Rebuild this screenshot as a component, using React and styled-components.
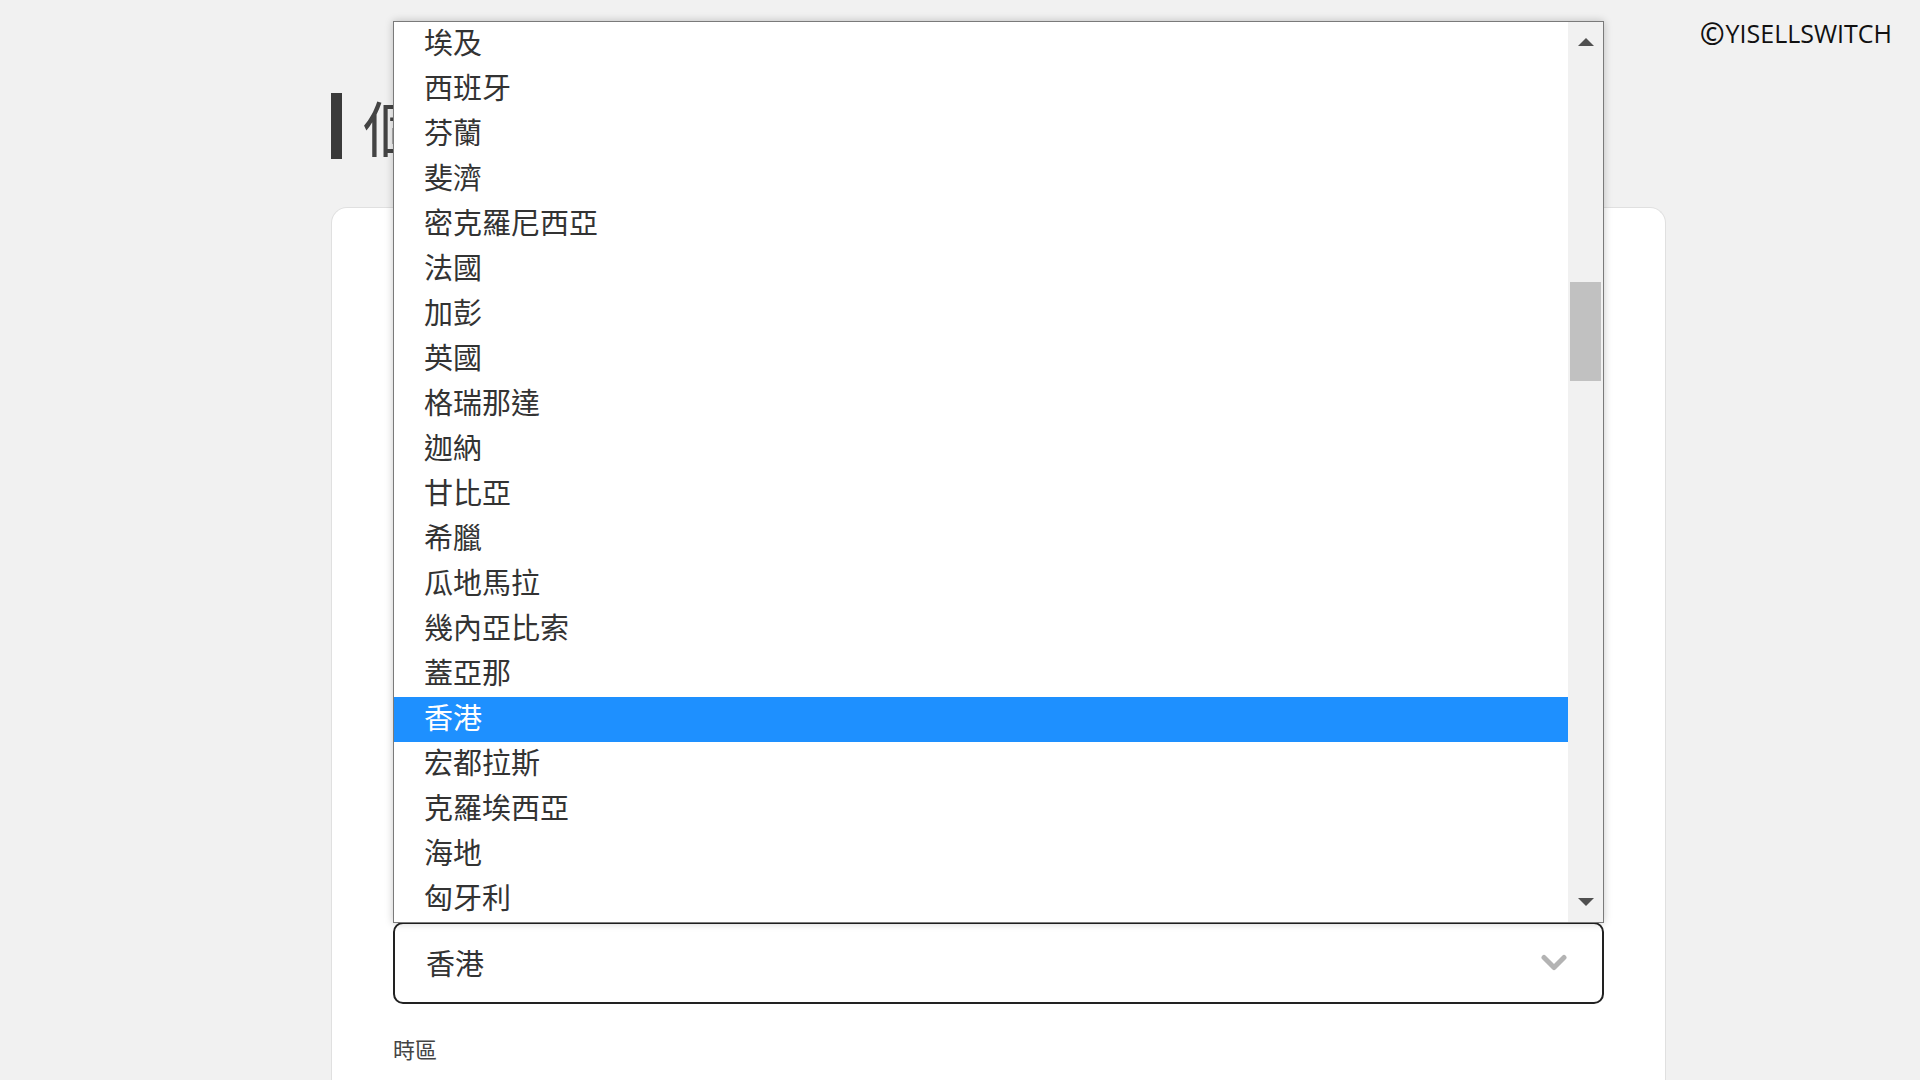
import React from 'react';
import styled, { createGlobalStyle } from 'styled-components';

const GlobalStyle = createGlobalStyle`
  html, body { margin: 0; padding: 0; background: #f1f1f1; }
  body {
    font-family: "Noto Sans CJK TC", "Noto Sans", sans-serif;
    color: #333;
    overflow: hidden;
  }
  * { box-sizing: border-box; }
`;

const Page = styled.div`
  position: relative;
  min-height: 100vh;
  padding: 93px 0 0 331px;
`;

const Watermark = styled.div`
  position: absolute;
  top: 16px;
  right: 28px;
  font-family: "Open Sans", "Noto Sans", sans-serif;
  font-size: 25px;
  font-weight: 500;
  line-height: 34px;
  color: #111;
  z-index: 20;
`;

const CopyMark = styled.span`
  font-size: 30px;
  font-weight: 600;
  line-height: 0;
  vertical-align: -2px;
  margin-right: 1px;
`;

const Main = styled.main`
  width: 1335px;
`;

const Heading = styled.h1`
  margin: 0;
  border-left: 11px solid #3a3a3a;
  padding-left: 21px;
  font-size: 60px;
  line-height: 66px;
  font-weight: 400;
  color: #444;
`;

const Card = styled.section`
  margin-top: 48px;
  background: #fff;
  border: 1px solid #e0e0e0;
  border-bottom: none;
  border-radius: 16px 16px 0 0;
  padding: 714px 61px 120px;
  display: flex;
  flex-direction: column;
  gap: 29px;
  min-height: 1000px;
`;

const Field = styled.div`
  display: flex;
  flex-direction: column;
  gap: 22px;
`;

const Label = styled.label`
  font-size: 22px;
  line-height: 30px;
  color: #444;
`;

const SelectWrap = styled.div`
  position: relative;
`;

const SelectBox = styled.div`
  height: 82px;
  border: 2px solid ${p => (p.$active ? '#222' : '#cfcfcf')};
  border-radius: 10px;
  background: #fff;
  display: flex;
  align-items: center;
  justify-content: space-between;
  padding: 0 35px 2px 31px;
  font-size: 29px;
  color: #333;
`;

const Popup = styled.div`
  position: absolute;
  left: 0;
  right: 0;
  bottom: calc(100% - 1px);
  height: 902px;
  display: flex;
  background: #fff;
  border: 1px solid #7a7a7a;
  box-shadow: 0 0 8px rgba(0, 0, 0, 0.22);
  z-index: 10;
`;

const OptionList = styled.ul`
  flex: 1;
  margin: 0;
  padding: 0;
  list-style: none;
  overflow: hidden;
`;

const Option = styled.li`
  height: 45px;
  line-height: 38px;
  padding-left: 30px;
  font-size: 29px;
  white-space: nowrap;
  color: ${p => (p.$selected ? '#fff' : '#333')};
  background: ${p => (p.$selected ? '#1e90ff' : 'transparent')};
`;

const Scrollbar = styled.div`
  width: 35px;
  display: flex;
  flex-direction: column;
  background: #f1f1f1;
`;

const ScrollButton = styled.div`
  height: 40px;
  display: flex;
  align-items: center;
  justify-content: center;
`;

const Track = styled.div`
  flex: 1;
  padding: 0 2px;
`;

const Thumb = styled.div`
  background: #c1c1c1;
`;

const countries = [
  '埃及', '西班牙', '芬蘭', '斐濟', '密克羅尼西亞', '法國', '加彭', '英國',
  '格瑞那達', '迦納', '甘比亞', '希臘', '瓜地馬拉', '幾內亞比索', '蓋亞那',
  '香港', '宏都拉斯', '克羅埃西亞', '海地', '匈牙利',
];

const TRACK_HEIGHT = 820;
const TOTAL_OPTIONS = 166;
const FIRST_VISIBLE = 44.5;

const Triangle = ({ up }) => (
  <svg width="16" height="8" viewBox="0 0 16 8">
    <polygon points={up ? '0,8 8,0 16,8' : '0,0 16,0 8,8'} fill="#505050" />
  </svg>
);

const Chevron = () => (
  <svg width="26" height="17" viewBox="0 0 26 17">
    <polyline
      points="3,3.5 13,13.5 23,3.5"
      fill="none"
      stroke="#b3b3b3"
      strokeWidth="5"
      strokeLinecap="round"
      strokeLinejoin="round"
    />
  </svg>
);

export default function App() {
  const selected = '香港';
  const thumbHeight = (TRACK_HEIGHT * countries.length) / TOTAL_OPTIONS;
  const thumbTop = (TRACK_HEIGHT * FIRST_VISIBLE) / TOTAL_OPTIONS;

  return (
    <>
      <GlobalStyle />
      <Page>
        <Watermark>
          <CopyMark>©</CopyMark>YISELLSWITCH
        </Watermark>
        <Main>
          <Heading>個人資料</Heading>
          <Card>
            <Field>
              <SelectWrap aria-label="國家/地區">
                <Popup>
                  <OptionList>
                    {countries.map(c => (
                      <Option key={c} $selected={c === selected}>{c}</Option>
                    ))}
                  </OptionList>
                  <Scrollbar>
                    <ScrollButton><Triangle up /></ScrollButton>
                    <Track>
                      <Thumb style={{ marginTop: thumbTop, height: thumbHeight }} />
                    </Track>
                    <ScrollButton><Triangle /></ScrollButton>
                  </Scrollbar>
                </Popup>
                <SelectBox $active>
                  <span>{selected}</span>
                  <Chevron />
                </SelectBox>
              </SelectWrap>
            </Field>
            <Field>
              <Label>時區</Label>
              <SelectBox />
            </Field>
          </Card>
        </Main>
      </Page>
    </>
  );
}
